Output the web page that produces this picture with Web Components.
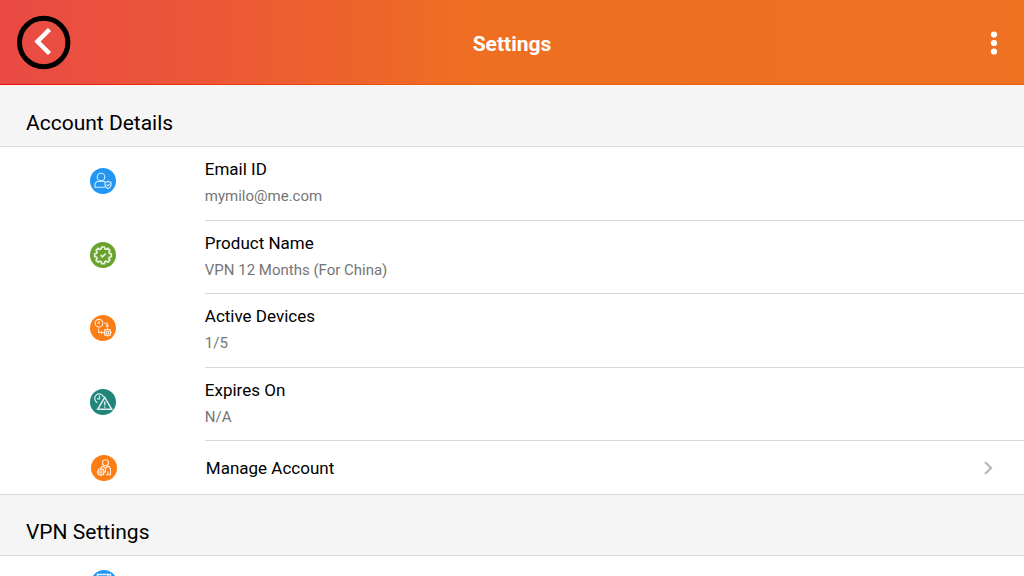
<!DOCTYPE html>
<html lang="en">
<head>
<meta charset="utf-8">
<meta name="viewport" content="width=device-width, initial-scale=1">
<title>Settings</title>
<style>
  body { margin: 0; background: #fff; font-family: Roboto, "Noto Sans", sans-serif; color: #000; }
</style>
</head>
<body>
<settings-page>
  <app-bar heading="Settings"></app-bar>
  <settings-section heading="Account Details">
    <detail-list>
      <detail-row icon="user" label="Email ID">mymilo@me.com</detail-row>
      <detail-row icon="badge" label="Product Name">VPN 12 Months (For China)</detail-row>
      <detail-row icon="devices" label="Active Devices">1/5</detail-row>
      <detail-row icon="expiry" label="Expires On">N/A</detail-row>
    </detail-list>
    <action-row icon="manage">Manage Account</action-row>
  </settings-section>
  <settings-section heading="VPN Settings">
    <action-row icon="protocol"></action-row>
  </settings-section>
</settings-page>

<script>
const GEAR = '<circle r="3"/><circle r="1.2"/><path stroke-width="1.3" d="M0-3v-1.2M0 3v1.2M-3 0h-1.2M3 0h1.2M-2.1-2.1l-.9-.9M2.1-2.1l.9-.9M-2.1 2.1l-.9.9M2.1 2.1l.9.9"/>';
const ICONS = {
  user: ['#2196f3', '<circle cx="11" cy="9" r="3.8"/><path d="M15.2 19.2H5v-1.700c0-2.800 2-4.300 4.200-4.300h3.300c1 0 1.800.2 2.500.6"/><path d="M18 13.200c1 .8 1.900 1 3 1.100v2.300c0 2-1.200 3.200-3 4-1.800-.8-3-2-3-4v-2.300c1.100-.1 2-.3 3-1.100z"/><path d="M16.600 16.700l1.100 1.100 1.900-1.900"/>'],
  badge: ['#6aa22e', '<path stroke-width="1.700" d="M11.600 5h2.800l.5 1.900 1.300.5 1.700-1 2 2-1 1.700.5 1.300 1.900.5v2.800l-1.900.5-.5 1.300 1 1.700-2 2-1.700-1-1.300.5-.5 1.900h-2.800l-.5-1.900-1.300-.5-1.700 1-2-2 1-1.700-.5-1.300-1.900-.5v-2.800l1.900-.5.5-1.300-1-1.700 2-2 1.700 1 1.300-.5z"/><path stroke-width="1.700" d="M10.600 13.200l1.800 1.700 3.200-3.300"/>'],
  devices: ['#fb7d14', '<circle cx="9" cy="8.200" r="3.800"/><path d="M9 6v2.300H7.300"/><path d="M14.300 8.200h2.900v3.600M15.800 10.500l1.400 1.400 1.400-1.400M8.700 13.500v4h3.600M11 16.100l1.400 1.400-1.400 1.400"/><g transform="translate(17.500 17.500)">' + GEAR + '</g>'],
  expiry: ['#20867c', '<path stroke-width="1.300" d="M7.400 13.700A4.600 4.600 0 1 1 13.600 7.900M9.500 6.500v3.300H7"/><path stroke-width="1.500" d="M14.700 8.300l7 12H7.700z"/><path stroke-width="1.500" d="M14.700 12.500v4.100M14.700 17.500v1.300"/>'],
  manage: ['#fb7d14', '<circle cx="14.500" cy="7.700" r="3"/><path d="M9.700 13.400c.3-1.400 1.300-2 2.800-2l2 2 2-2c2 0 3 1 3 3v5.300h-4.600M14.500 13.500v4M16.900 19.500v-3"/><g transform="translate(10 17)">' + GEAR + '</g>'],
  protocol: ['#2196f3', '<path stroke-width="1.500" d="M6.500 4.500h13v17h-13zM17 5v3"/>']
};

function define(name, css, markup, setup) {
  const template = document.createElement('template');
  template.innerHTML = '<style>' + css + '</style>' + markup;
  customElements.define(name, class extends HTMLElement {
    connectedCallback() {
      if (this.shadowRoot) return;
      const root = this.attachShadow({ mode: 'open' });
      root.append(template.content.cloneNode(true));
      if (setup) setup(this, root);
    }
  });
}

define('settings-page',
  ':host { display: flex; flex-direction: column; height: 100vh; overflow: hidden; }',
  '<slot></slot>');

define('app-bar', `
  :host { display: block; flex: none; }
  header { display: grid; grid-template-columns: 60px 1fr 60px; align-items: center; box-sizing: border-box;
    min-height: 85px; padding: 0 0 0 16px; color: #fff; border-bottom: 1px solid transparent;
    background: linear-gradient(90deg, #e94a45, #ec5a34 24%, #ef6f22 47%, #ef7122) padding-box,
      linear-gradient(90deg, #e8100c, #ea3e10 24%, #ee6008 47%) border-box; }
  button { display: flex; padding: 0; border: 0; background: none; color: inherit; cursor: pointer; }
  h1 { margin: 0; padding: 4px 16px 0 0; font-size: 21px; line-height: 28px; font-weight: 700; text-align: center; }
  .menu { justify-self: center; padding-top: 1px; }`,
  `<header>
    <button type="button" aria-label="Back"><svg width="56" height="56" viewBox="0 0 56 56" fill="none">
      <circle cx="27.700" cy="28.500" r="24.200" stroke="#000" stroke-width="5"/>
      <path d="M33.500 15.500L21.500 27.500 33.500 39.500" stroke="#fff" stroke-width="4.500"/></svg></button>
    <h1></h1>
    <button class="menu" type="button" aria-label="More options"><svg width="8" height="24" viewBox="0 0 8 24" fill="currentColor">
      <circle cx="4" cy="3.500" r="3.100"/><circle cx="4" cy="12" r="3.100"/><circle cx="4" cy="20.500" r="3.100"/></svg></button>
  </header>`,
  (el, root) => { root.querySelector('h1').textContent = el.getAttribute('heading'); });

define('settings-section', `
  :host { display: block; flex: none; }
  h2 { box-sizing: border-box; margin: 0; padding: 24px 26px 9px; font-size: 21px; line-height: 27px; font-weight: 400;
    background: #f5f5f5; border: solid #dadada; border-width: 1px 0; }
  :host(:first-of-type) h2 { border-top-color: #f9f5f3; }`,
  '<section><h2></h2><slot></slot></section>',
  (el, root) => { root.querySelector('h2').textContent = el.getAttribute('heading'); });

define('detail-list',
  ':host { display: grid; grid-auto-rows: 1fr; min-height: 294px; }',
  '<slot></slot>');

define('round-icon',
  ':host { display: block; } svg { display: block; }',
  '<svg width="26" height="26" viewBox="0 0 26 26" fill="none" stroke="#fff" stroke-opacity=".85" stroke-width="1.100" aria-hidden="true"></svg>',
  (el, root) => {
    const [color, shape] = ICONS[el.getAttribute('name')];
    root.querySelector('svg').innerHTML = '<circle cx="13" cy="13" r="13" stroke="none" fill="' + color + '"/>' + shape;
  });

define('detail-row', `
  :host { display: grid; grid-template-columns: 20vw 1fr; }
  .icon { display: flex; justify-content: center; padding: 21px 0 0 1px; }
  dl { margin: 0; padding-top: 10px; border-bottom: 1px solid #d8d8d8; }
  dt { font-size: 17px; line-height: 24px; }
  dd { margin: 0; padding-top: 4px; font-size: 15px; line-height: 23px; color: #757575; }`,
  '<div class="icon"></div><dl><dt></dt><dd><slot></slot></dd></dl>',
  (el, root) => {
    root.querySelector('.icon').innerHTML = '<round-icon name="' + el.getAttribute('icon') + '"></round-icon>';
    root.querySelector('dt').textContent = el.getAttribute('label');
  });

define('action-row', `
  :host { display: block; }
  button { display: grid; grid-template-columns: 20vw 1fr 20px; align-items: center; width: 100%; min-height: 53px;
    padding: 0 26px 0 1px; border: 0; background: none; text-align: left; color: inherit;
    font: 400 17px/24px Roboto, "Noto Sans", sans-serif; cursor: pointer; }
  .icon { display: flex; justify-content: center; padding-left: 1px; }`,
  `<button type="button"><span class="icon"></span><span><slot></slot></span>
    <svg width="20" height="20" viewBox="0 0 20 20" fill="none" stroke="#b8b8b8" stroke-width="2.200" aria-hidden="true"><path d="M7 4l6 6-6 6"/></svg></button>`,
  (el, root) => {
    root.querySelector('.icon').innerHTML = '<round-icon name="' + el.getAttribute('icon') + '"></round-icon>';
  });
</script>
</body>
</html>
